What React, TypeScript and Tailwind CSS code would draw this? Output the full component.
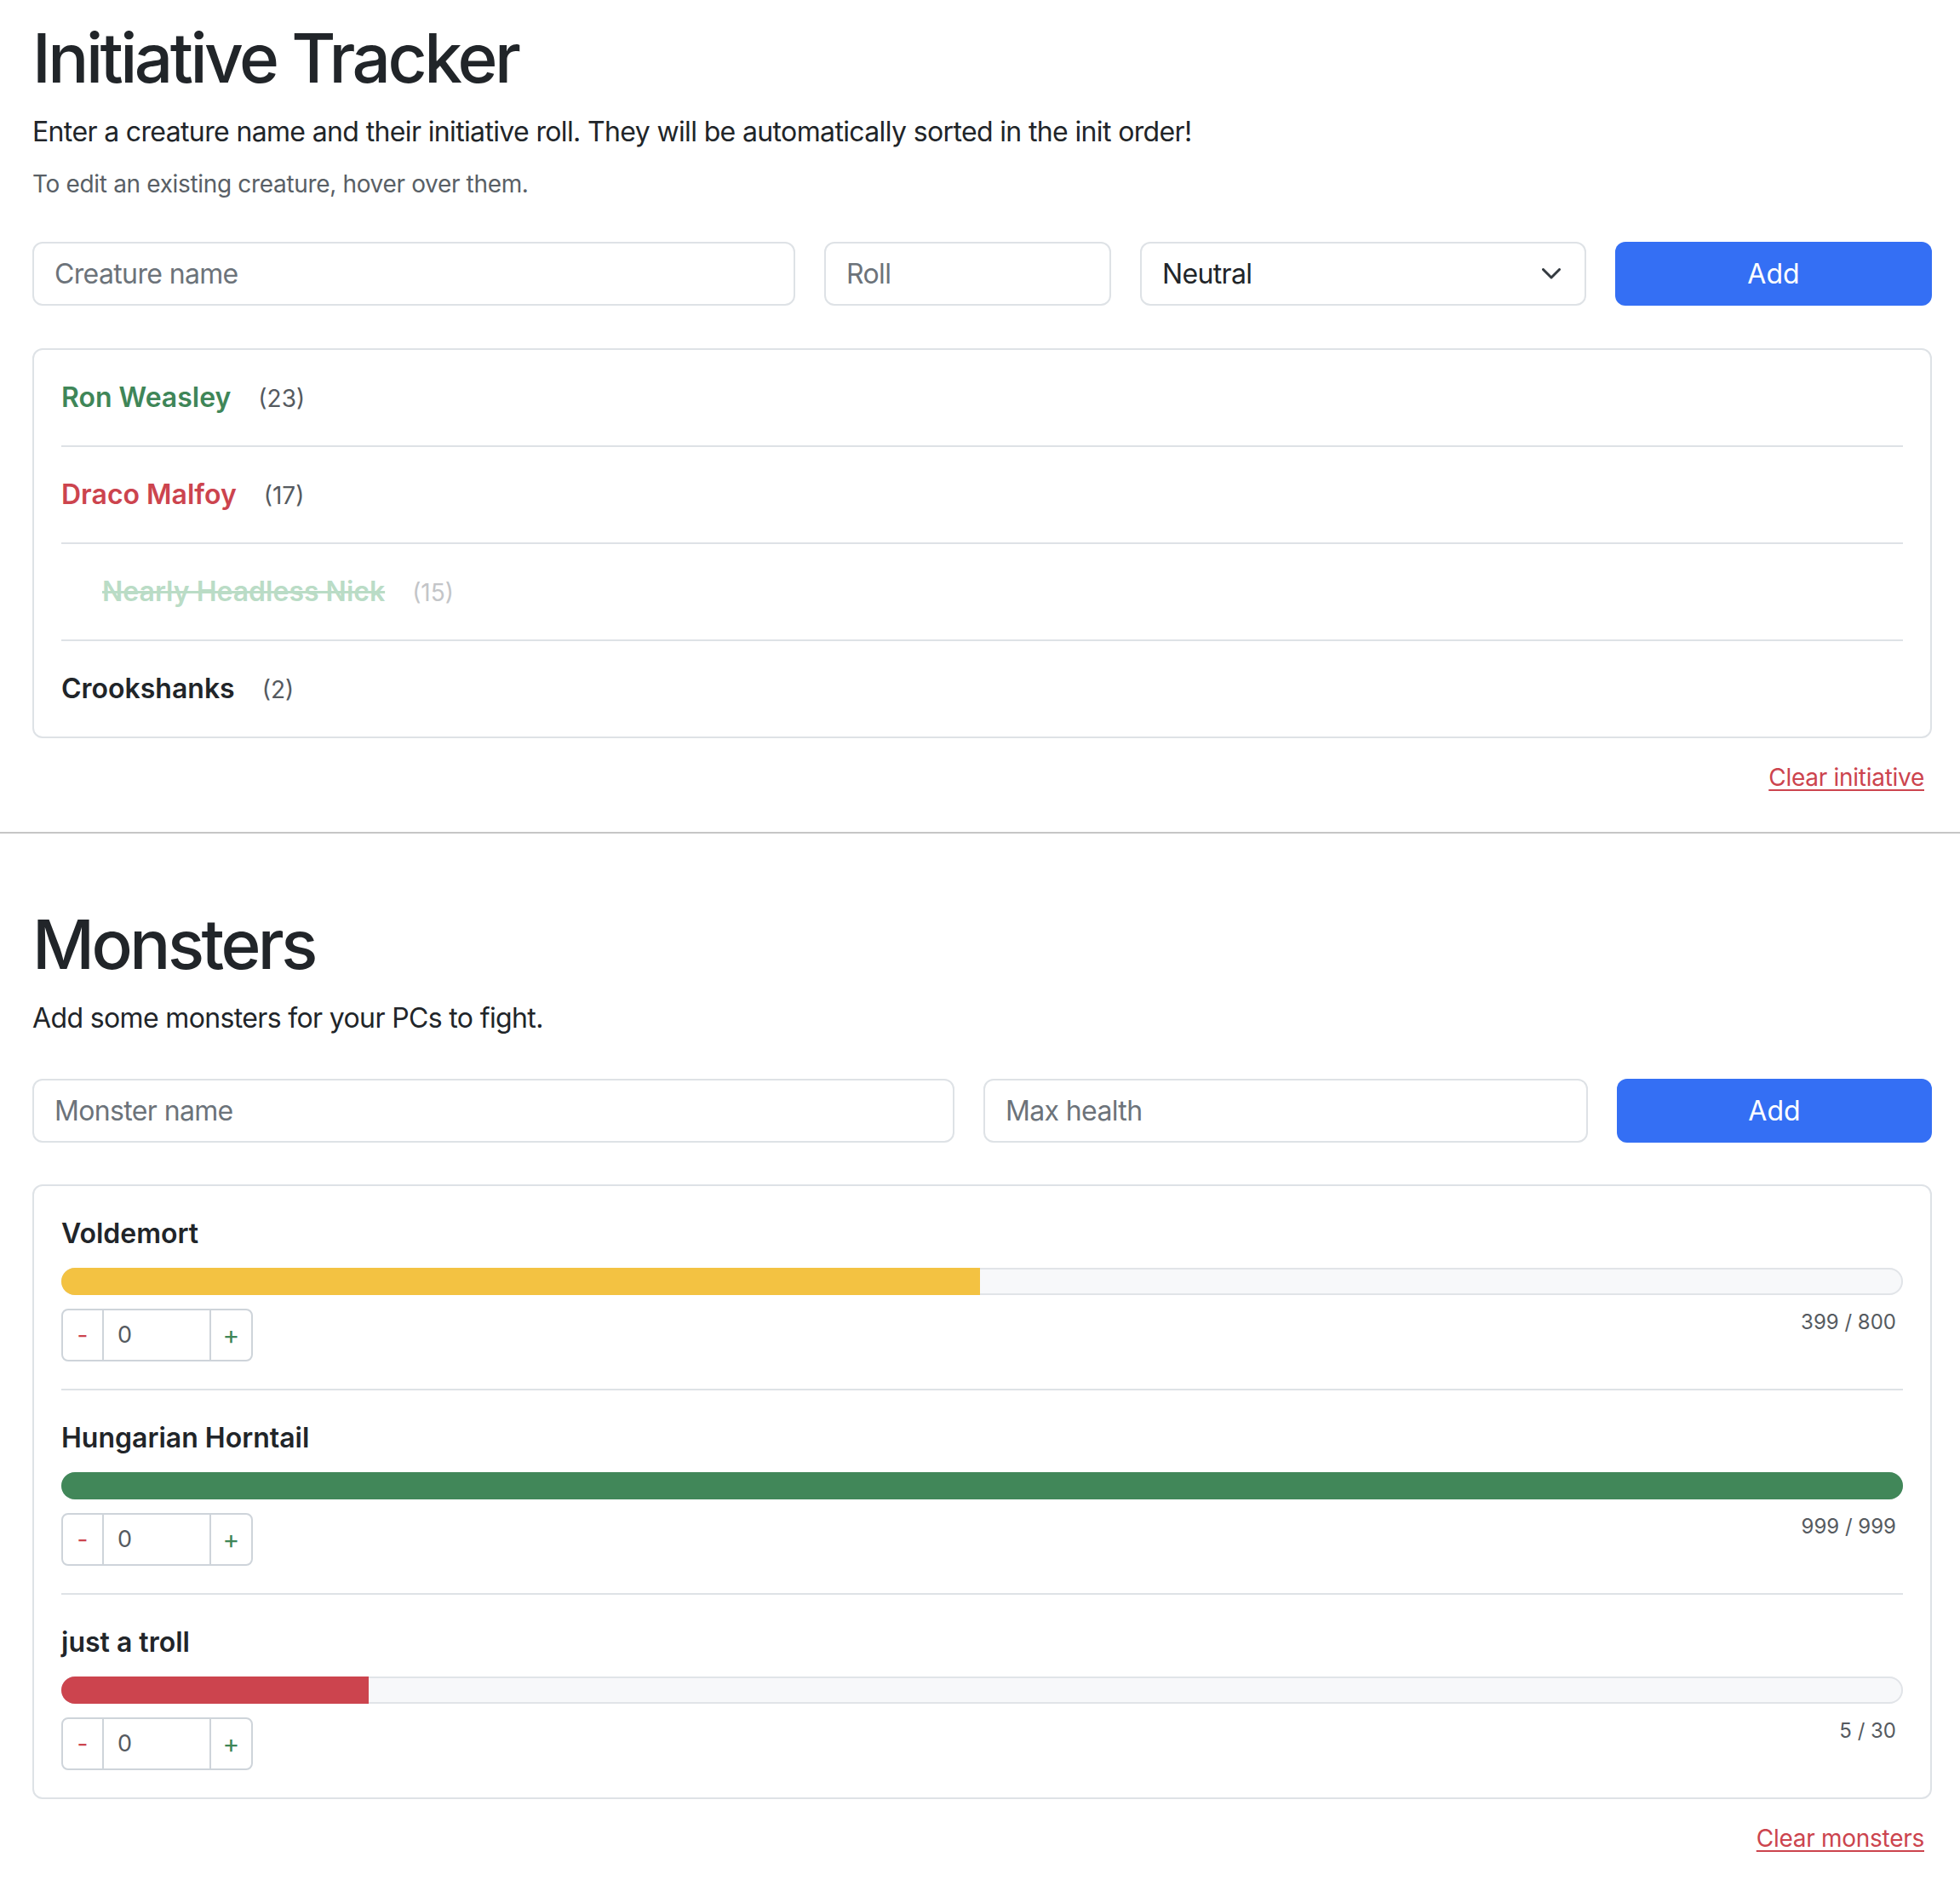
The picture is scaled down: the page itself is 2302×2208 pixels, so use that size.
import React from 'react';

interface Creature {
  name: string;
  roll: number;
  tone: string;
  rollTone: string;
  dead?: boolean;
}

interface Monster {
  name: string;
  hp: number;
  max: number;
  fill: string;
}

const creatures: Creature[] = [
  { name: 'Ron Weasley', roll: 23, tone: 'text-[#3f8658]', rollTone: 'text-[#555a60]' },
  { name: 'Draco Malfoy', roll: 17, tone: 'text-[#cc444e]', rollTone: 'text-[#555a60]' },
  { name: 'Nearly Headless Nick', roll: 15, tone: 'text-[#badcc6]', rollTone: 'text-[#c3c5c8]', dead: true },
  { name: 'Crookshanks', roll: 2, tone: 'text-[#212529]', rollTone: 'text-[#555a60]' },
];

const monsters: Monster[] = [
  { name: 'Voldemort', hp: 399, max: 800, fill: 'bg-[#f3c242]' },
  { name: 'Hungarian Horntail', hp: 999, max: 999, fill: 'bg-[#418759]' },
  { name: 'just a troll', hp: 5, max: 30, fill: 'bg-[#cc444e]' },
];

const inputClass =
  'h-full rounded-[12px] border-2 border-[#dee2e6] bg-white px-6 text-[32px] tracking-[-0.02em] text-[#212529] outline-none placeholder:text-[#6c737a]';

const App: React.FC = () => {
  return (
    <div className="min-h-screen bg-white font-['Inter',sans-serif] text-[#212529]">
      {/* Initiative */}
      <section className="pl-[38px] pr-[33px] pt-[20px]">
        <h1 className="text-[80px] font-medium leading-[96px] tracking-[-0.044em]">Initiative Tracker</h1>
        <p className="mt-[15px] text-[32px] leading-[48px] tracking-[-0.02em]">
          Enter a creature name and their initiative roll. They will be automatically sorted in the init order!
        </p>
        <p className="mt-[17px] text-[28px] leading-[40px] tracking-[-0.012em] text-[#595f66]">
          To edit an existing creature, hover over them.
        </p>

        <div className="mt-[48px] flex h-[75px] gap-[34px]">
          <input placeholder="Creature name" className={`w-[896px] ${inputClass}`} />
          <input placeholder="Roll" className={`w-[337px] ${inputClass}`} />
          <div className="flex h-full w-[524px] items-center justify-between rounded-[12px] border-2 border-[#dee2e6] pl-6 pr-[28px] text-[32px] tracking-[-0.02em]">
            <span>Neutral</span>
            <svg width="22" height="13" viewBox="0 0 22 13" fill="none">
              <path d="M1.5 1.5l9.5 9.5 9.5-9.5" stroke="#343a40" strokeWidth="3" strokeLinecap="round" strokeLinejoin="round" />
            </svg>
          </div>
          <button className="flex-1 rounded-[12px] bg-[#346ff4] text-[32px] text-white">Add</button>
        </div>

        <div className="mt-[50px] rounded-[12px] border-2 border-[#dee2e6] px-8">
          {creatures.map((c, i) => (
            <div
              key={i}
              className="flex items-baseline border-b-2 border-[#dee2e6] py-8 last:border-b-0"
            >
              <span
                className={`text-[32px] font-semibold leading-[48px] ${c.tone} ${c.dead ? 'ml-12 line-through' : ''}`}
              >
                {c.name}
              </span>
              <span className={`ml-[32px] text-[28px] leading-none ${c.rollTone}`}>({c.roll})</span>
            </div>
          ))}
        </div>

        <div className="mt-[25px] pr-[9px] text-right">
          <a href="#" className="text-[28px] leading-[42px] tracking-[-0.01em] text-[#cc444e] underline decoration-2 underline-offset-[4px]">
            Clear initiative
          </a>
        </div>
      </section>

      <hr className="mt-[43px] border-t-2 border-[#c6c6c6]" />

      {/* Monsters */}
      <section className="pb-[29px] pl-[38px] pr-[33px] pt-[82px]">
        <h1 className="text-[80px] font-medium leading-[96px] tracking-[-0.044em]">Monsters</h1>
        <p className="mt-[15px] text-[32px] leading-[48px] tracking-[-0.02em]">
          Add some monsters for your PCs to fight.
        </p>

        <div className="mt-[47px] flex h-[75px] gap-[34px]">
          <input placeholder="Monster name" className={`w-[1083px] ${inputClass}`} />
          <input placeholder="Max health" className={`w-[710px] ${inputClass}`} />
          <button className="flex-1 rounded-[12px] bg-[#346ff4] text-[32px] text-white">Add</button>
        </div>

        <div className="mt-[49px] rounded-[12px] border-2 border-[#dee2e6] px-8">
          {monsters.map((m, i) => (
            <div key={i} className="border-b-2 border-[#dee2e6] py-8 last:border-b-0">
              <div className="text-[32px] font-semibold leading-[48px]">{m.name}</div>
              <div className="mt-4 h-8 overflow-hidden rounded-full bg-[#f7f8fa] shadow-[inset_0_0_0_2px_#e1e4e8]">
                <div className={`h-full ${m.fill}`} style={{ width: `${(m.hp / m.max) * 100}%` }} />
              </div>
              <div className="mt-4 flex items-start justify-between">
                <div className="flex h-[62px] rounded-[8px] border-2 border-[#ced4da]">
                  <button className="w-[46px] text-[28px] text-[#cc444e]">-</button>
                  <input
                    defaultValue="0"
                    className="w-[128px] border-x-2 border-[#ced4da] pl-4 text-[27px] text-[#555a60] outline-none"
                  />
                  <button className="w-[47px] text-[30px] text-[#3f8658]">+</button>
                </div>
                <span className="mt-[3px] pr-[8px] text-[24px] leading-[26px] text-[#555a60]">
                  {m.hp} / {m.max}
                </span>
              </div>
            </div>
          ))}
        </div>

        <div className="mt-[25px] pr-[9px] text-right">
          <a href="#" className="text-[28px] leading-[42px] tracking-[-0.01em] text-[#cc444e] underline decoration-2 underline-offset-[4px]">
            Clear monsters
          </a>
        </div>
      </section>
    </div>
  );
};

export default App;
